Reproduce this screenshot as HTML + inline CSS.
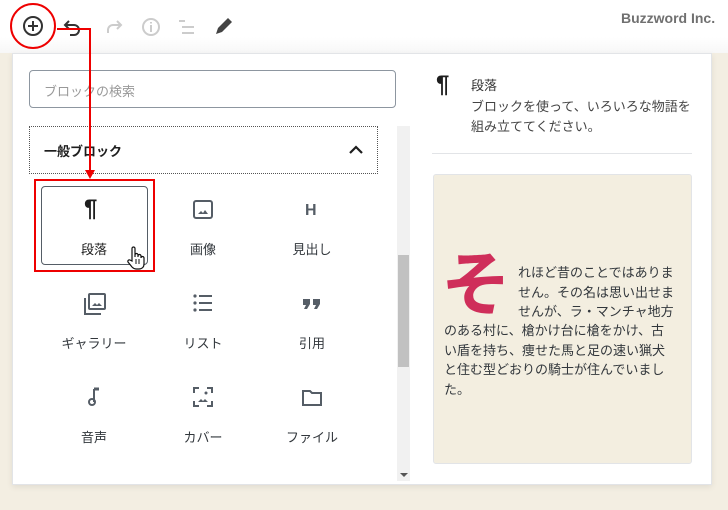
<!DOCTYPE html>
<html><head><meta charset="utf-8"><style>
*{margin:0;padding:0;box-sizing:border-box}
body{width:728px;height:510px;background:#f3eee2;position:relative;overflow:hidden;font-family:"Liberation Sans","Noto Sans CJK JP",sans-serif;color:#1e1e1e}
.top{position:absolute;left:0;top:0;width:728px;height:53px;background:linear-gradient(#fff 70%,#f7f7f7)}
.abs{position:absolute}
.panel{position:absolute;left:12px;top:53px;width:700px;height:432px;background:#fff;border:1px solid #e2e4e7;box-shadow:0 2px 6px rgba(0,0,0,.08)}
.lbl{position:absolute;font-size:13px;color:#32373c;text-align:center;width:100px}
.ic{position:absolute}
</style></head><body>
<div class="top"></div>
<svg class="abs" style="left:0;top:0" width="260" height="50">
<circle cx="33" cy="26" r="9" fill="none" stroke="#333" stroke-width="2"/>
<path d="M33 21v10M28 26h10" stroke="#333" stroke-width="2"/>
<path d="M69 21l-4 4 4 4M65 25h9a5 5 0 0 1 0 10h-4" fill="none" stroke="#333" stroke-width="2"/>
<path d="M117 21l4 4-4 4M121 25h-8a5 5 0 0 0-5 5v3" fill="none" stroke="#ccc" stroke-width="2"/>
<circle cx="151" cy="27" r="8" fill="none" stroke="#ccc" stroke-width="2"/>
<path d="M151 25v7M151 22v1.5" stroke="#ccc" stroke-width="2"/>
<path d="M179 21h6M182 27h12M182 33h12" stroke="#ccc" stroke-width="2"/>
<path d="M216 34l2-6 10-10 4 4-10 10z" fill="#444"/>
</svg>
<div class="abs" style="left:10px;top:3px;width:46px;height:46px;border:2px solid #e00;border-radius:50%"></div>
<div class="abs" style="left:621px;top:10px;font-size:14px;font-weight:bold;color:#707070">Buzzword Inc.</div>
<div class="panel"></div>
<div class="abs" style="left:29px;top:70px;width:367px;height:38px;border:1px solid #8d96a0;border-radius:4px;font-size:13px;color:#999;padding:10px 14px">ブロックの検索</div>
<div class="abs" style="left:29px;top:126px;width:349px;height:48px;border:1px dotted #555;font-size:13px;font-weight:bold;padding:14px 14px">一般ブロック</div>
<svg class="abs" style="left:348px;top:144px" width="16" height="12"><path d="M2 9l6-6 6 6" fill="none" stroke="#1e1e1e" stroke-width="2.2"/></svg>
<div class="abs" style="left:397px;top:126px;width:13px;height:355px;background:#f1f1f1"></div>
<div class="abs" style="left:398px;top:255px;width:11px;height:112px;background:#c1c1c1"></div>
<svg class="abs" style="left:399px;top:472px" width="10" height="6"><path d="M1 1h8l-4 4z" fill="#555"/></svg>
<div class="abs" style="left:34px;top:179px;width:121px;height:93px;border:2px solid #e00"></div>
<div class="abs" style="left:41px;top:186px;width:107px;height:79px;border:1px solid #555d66;border-radius:4px"></div>
<div class="ic" style="left:84px;top:195px;font-size:24px;font-weight:bold;color:#1e1e1e">¶</div>
<svg class="ic" style="left:192px;top:199px" width="22" height="22"><rect x="2" y="2" width="18" height="17" rx="2" fill="none" stroke="#555d66" stroke-width="2"/><path d="M6 15l3-3 2 2 2-3 3 4z" fill="#555d66"/></svg>
<div class="ic" style="left:305px;top:202px;font-size:16px;font-weight:bold;color:#555d66">H</div>
<svg class="ic" style="left:83px;top:292px" width="24" height="24"><rect x="6" y="2" width="16" height="15" rx="1" fill="none" stroke="#555d66" stroke-width="2"/><path d="M2 6v16h16" fill="none" stroke="#555d66" stroke-width="2"/><path d="M9 14l3-3 2 2 2-2 3 3z" fill="#555d66"/></svg>
<svg class="ic" style="left:192px;top:293px" width="22" height="20"><circle cx="3" cy="3" r="1.6" fill="#555d66"/><circle cx="3" cy="10" r="1.6" fill="#555d66"/><circle cx="3" cy="17" r="1.6" fill="#555d66"/><path d="M7 3h13M7 10h13M7 17h13" stroke="#555d66" stroke-width="2"/></svg>
<svg class="ic" style="left:302px;top:298px" width="20" height="12"><path d="M1 1h7v5l-3 5H2l2-4H1zM11 1h7v5l-3 5h-3l2-4h-3z" fill="#555d66"/></svg>
<svg class="ic" style="left:86px;top:386px" width="16" height="22"><path d="M8 3v13" stroke="#555d66" stroke-width="2"/><path d="M8 3h5" stroke="#555d66" stroke-width="3"/><circle cx="6" cy="16" r="3" fill="none" stroke="#555d66" stroke-width="2"/></svg>
<svg class="ic" style="left:192px;top:386px" width="22" height="22"><path d="M2 7V2h5M15 2h5v5M20 15v5h-5M7 20H2v-5" fill="none" stroke="#555d66" stroke-width="2"/><path d="M6 16l3-3 2 2 2-2 3 3z" fill="#555d66"/><circle cx="14" cy="7" r="1.5" fill="#555d66"/></svg>
<svg class="ic" style="left:301px;top:388px" width="22" height="20"><path d="M2 3h7l2 2h9v12H2z" fill="none" stroke="#555d66" stroke-width="2"/></svg>
<div class="lbl" style="left:44px;top:239px;color:#1e1e1e">段落</div>
<div class="lbl" style="left:153px;top:239px">画像</div>
<div class="lbl" style="left:262px;top:239px">見出し</div>
<div class="lbl" style="left:44px;top:333px">ギャラリー</div>
<div class="lbl" style="left:153px;top:333px">リスト</div>
<div class="lbl" style="left:262px;top:333px">引用</div>
<div class="lbl" style="left:44px;top:427px">音声</div>
<div class="lbl" style="left:153px;top:427px">カバー</div>
<div class="lbl" style="left:262px;top:427px">ファイル</div>
<svg class="abs" style="left:124px;top:245px" width="22" height="26"><path d="M8 16V3.5a1.5 1.5 0 0 1 3 0V12v-2a1.5 1.5 0 0 1 3 0v2-1a1.5 1.5 0 0 1 3 0v2a1.5 1.5 0 0 1 3 0v6c0 3-2 5-5 5h-3c-2 0-3-1-4-2l-4-5a1.5 1.5 0 0 1 2-2z" fill="#fff" stroke="#111" stroke-width="1.2"/><path d="M12 14v5M15 14v5" stroke="#111" stroke-width="1"/></svg>
<svg class="abs" style="left:0;top:0" width="728" height="510"><path d="M57 29H90V172" fill="none" stroke="#e00" stroke-width="2"/><path d="M85 170h10l-5 9z" fill="#e00"/></svg>
<div class="abs" style="left:436px;top:71px;font-size:24px;font-weight:bold;color:#1e1e1e">¶</div>
<div class="abs" style="left:471px;top:75px;font-size:13px;color:#333">段落</div>
<div class="abs" style="left:471px;top:97px;font-size:13px;color:#444;line-height:20px">ブロックを使って、いろいろな物語を<br>組み立ててください。</div>
<div class="abs" style="left:432px;top:153px;width:260px;height:1px;background:#e2e4e7"></div>
<div class="abs" style="left:433px;top:174px;width:259px;height:290px;background:#f3eee0;border:1px solid #e2e4e7;border-radius:3px"></div>
<div class="abs" style="left:441px;top:245px;font-size:70px;font-weight:bold;color:#cf2e5a;line-height:70px;font-family:'Noto Sans CJK JP',sans-serif">そ</div>
<div class="abs" style="left:518px;top:263px;font-size:13px;color:#32373c;line-height:19.5px;width:170px">れほど昔のことではありま<br>せん。その名は思い出せま<br>せんが、ラ・マンチャ地方</div>
<div class="abs" style="left:444px;top:321px;font-size:13px;color:#32373c;line-height:19.5px;width:245px">のある村に、槍かけ台に槍をかけ、古<br>い盾を持ち、痩せた馬と足の速い猟犬<br>と住む型どおりの騎士が住んでいまし<br>た。</div>
</body></html>
